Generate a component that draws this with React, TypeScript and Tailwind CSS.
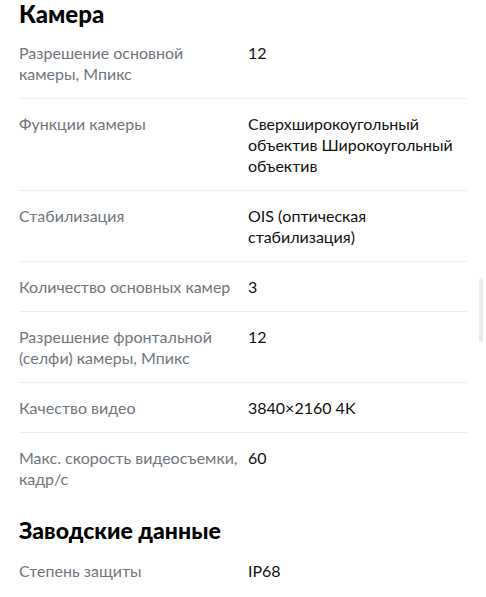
const camera = [
  { label: 'Разрешение основной камеры, Мпикс', value: '12' },
  { label: 'Функции камеры', value: 'Сверхширокоугольный объектив Широкоугольный объектив' },
  { label: 'Стабилизация', value: 'OIS (оптическая стабилизация)' },
  { label: 'Количество основных камер', value: '3' },
  { label: 'Разрешение фронтальной (селфи) камеры, Мпикс', value: '12' },
  { label: 'Качество видео', value: '3840×2160 4K' },
  { label: 'Макс. скорость видеосъемки, кадр/с', value: '60' },
]

const factory = [{ label: 'Степень защиты', value: 'IP68' }]

function SpecRow({ label, value, last }: { label: string; value: string; last?: boolean }) {
  return (
    <div className={`flex py-[14px] ${last ? '' : 'border-b border-[#ededed]'}`}>
      <div className="w-[229px] shrink-0 pr-[6px] text-[#71757c]">{label}</div>
      <div className="flex-1 text-[#111]">{value}</div>
    </div>
  )
}

export default function App() {
  return (
    <div
      className="relative h-[597px] w-[486px] overflow-hidden bg-white px-[19px] text-[16px] leading-[21px]"
      style={{ fontFamily: 'Lato, "Noto Sans", sans-serif' }}
    >
      <h2 className="text-[24px] font-black leading-[28px] text-black">Камера</h2>
      <div>
        {camera.map((row, i) => (
          <SpecRow key={row.label} {...row} last={i === camera.length - 1} />
        ))}
      </div>
      <h2 className="mt-[13px] mb-[2px] text-[23px] font-black leading-[28px] text-black">Заводские данные</h2>
      <div>
        {factory.map((row) => (
          <SpecRow key={row.label} {...row} last />
        ))}
      </div>
      <div className="absolute right-[3px] top-[278px] h-[64px] w-[4px] rounded-full bg-[#ececec]" />
    </div>
  )
}
